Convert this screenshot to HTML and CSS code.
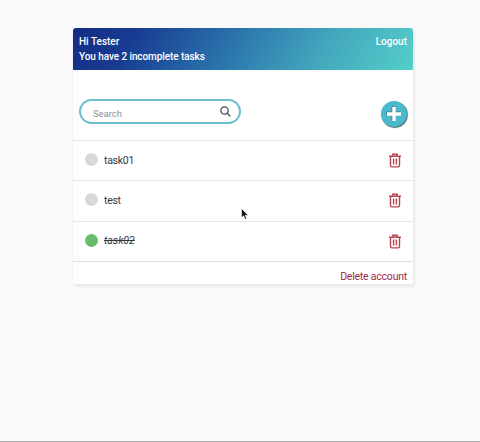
FILE: index.html
```html
<!DOCTYPE html>
<html lang="en">
<head>
<meta charset="utf-8">
<title>Tasks</title>
<link rel="stylesheet" href="styles.css">
</head>
<body>
<svg class="sprite" aria-hidden="true">
  <symbol id="trash" viewBox="0 0 12 15">
    <path d="M0 3.2h12M3.8 3V1.2h4.4V3M1.5 3.5v9.1q0 1.3 1.3 1.3h6.4q1.3 0 1.3-1.3V3.5M4.6 5.6v5.8M7.4 5.6v5.8" fill="none" stroke="#b94551" stroke-width="1.4"/>
  </symbol>
</svg>
<main class="card">
  <header class="header">
    <div class="greeting"><div>Hi Tester</div><div class="summary">You have 2 incomplete tasks</div></div>
    <a class="logout">Logout</a>
  </header>
  <section class="toolbar">
    <label class="search">
      <span class="placeholder">Search</span>
      <svg class="search-icon" viewBox="0 0 11 11"><circle cx="4.5" cy="4.5" r="3.7"/><path d="M7.2 7.2L10.4 10.4"/></svg>
    </label>
    <button class="add" aria-label="Add task"><svg viewBox="0 0 26 26"><path class="plus-shadow" d="M12.3 5.3v14M5.3 12.3h14"/><path class="plus" d="M13 6v14M6 13h14"/></svg></button>
  </section>
  <ul class="tasks">
    <li class="task"><span class="dot"></span><span class="name">task01</span><svg class="trash"><use href="#trash"/></svg></li>
    <li class="task"><span class="dot"></span><span class="name">test</span><svg class="trash"><use href="#trash"/></svg></li>
    <li class="task done"><span class="dot"></span><span class="name">task02</span><svg class="trash"><use href="#trash"/></svg></li>
  </ul>
  <footer class="footer"><a class="delete">Delete account</a></footer>
</main>
<svg class="cursor" viewBox="0 0 8 12"><path d="M.5.5v9.2l2.1-1.9 1.4 3.4 1.6-.7-1.4-3.2h3z" fill="#10131c" stroke="#fff" stroke-width=".6"/></svg>
</body>
</html>
```
FILE: styles.css
```css
* { box-sizing: border-box; }
body {
  margin: 0;
  height: 442px;
  padding-top: 28px;
  overflow: hidden;
  background: #fafafa;
  border-bottom: 1px solid #a9a9a9;
  font-family: Roboto, "Liberation Sans", sans-serif;
  color: #36383d;
}
.sprite { position: absolute; width: 0; height: 0; }
.card {
  width: 340px;
  height: 256px;
  margin-left: 73px;
  display: flex;
  flex-direction: column;
  background: linear-gradient(90deg, #fcfcfc 7px, #fff 7px);
  border-radius: 3px 3px 0 0;
  box-shadow: 1px 2px 4px rgba(0, 0, 0, .1);
}
.header {
  flex: none;
  height: 42px;
  padding: 6px 6px 0;
  display: flex;
  justify-content: space-between;
  border-radius: 3px 3px 0 0;
  background: linear-gradient(120deg, #142c83 0%, #183c92 18%, #2b76ad 47%, #43a6bd 72%, #54cfc9 100%);
  color: #fff;
  font-size: 10px;
  font-weight: 500;
  line-height: 15px;
}
.greeting, .logout { white-space: nowrap; }
.summary { letter-spacing: -.08px; }
.toolbar {
  flex: none;
  height: 70px;
  padding: 29px 6px 0 6px;
  display: flex;
  justify-content: space-between;
  align-items: flex-start;
}
.search {
  width: 162px;
  height: 25px;
  padding: 0 8px 0 12px;
  display: flex;
  align-items: center;
  justify-content: space-between;
  border: 2px solid #6dbed1;
  border-radius: 13px;
  background: #fff;
}
.placeholder { padding-top: 4px; font-size: 9.5px; letter-spacing: -.05px; color: #8f9195; }
.search-icon { width: 11px; height: 11px; fill: none; stroke: #484b50; stroke-width: 1.3; }
.add {
  width: 26px;
  height: 26px;
  margin-top: 2px;
  padding: 0;
  border: 0;
  border-radius: 50%;
  background: #4bb9cc;
  box-shadow: .7px .8px 1px #30474e;
}
.add svg { display: block; width: 26px; height: 26px; fill: none; stroke-width: 3.4; }
.plus { stroke: #fff; }
.plus-shadow { stroke: #477780; }
.tasks { flex: none; margin: 0; padding: 0; list-style: none; }
.task {
  height: 40.3px;
  padding: 0 12px;
  display: flex;
  align-items: center;
  border-top: 1px solid #e6e6e6;
}
.dot { width: 13px; height: 13px; margin-top: -2px; border-radius: 50%; background: #d8d8d8; }
.name { margin-left: 6px; font-size: 10.5px; letter-spacing: -.28px; line-height: 14px; }
.trash { width: 12px; height: 15px; margin-left: auto; }
.done .dot { background: #68bd6d; }
.done .name { font-style: italic; text-decoration: line-through; letter-spacing: 0; }
.footer {
  flex: 1;
  padding: 7px 6px 0;
  border-top: 1px solid #dedede;
  text-align: right;
  font-size: 10.5px;
  letter-spacing: -.22px;
  line-height: 15px;
}
.delete { color: #a02a4a; }
.cursor { position: absolute; left: 241px; top: 208px; width: 8px; height: 12px; }
```
